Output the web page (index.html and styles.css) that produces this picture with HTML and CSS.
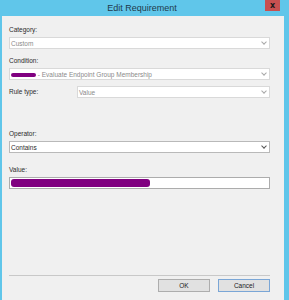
FILE: index.html
```html
<!DOCTYPE html>
<html lang="en">

<head>
    <meta charset="utf-8">
    <meta name="viewport" content="width=device-width, initial-scale=1.0">
    <title>Edit Requirement</title>

    <link rel="stylesheet" href="styles.css">
</head>

<body>
    <div class="window">
        <header class="titlebar">
            <h1>Edit Requirement</h1>
            <button class="close">x</button>
        </header>

        <main class="client">
            <div class="field">
                <label>Category:</label>
                <div class="select disabled">
                    <span>Custom</span>
                    <span class="arrow"></span>
                </div>
            </div>

            <div class="field condition">
                <label>Condition:</label>
                <div class="select disabled">
                    <span><span class="scribble small"></span> - Evaluate Endpoint Group Membership</span>
                    <span class="arrow"></span>
                </div>
            </div>

            <div class="field inline">
                <label>Rule type:</label>
                <div class="select disabled">
                    <span>Value</span>
                    <span class="arrow"></span>
                </div>
            </div>

            <div class="field operator">
                <label>Operator:</label>
                <div class="select">
                    <span>Contains</span>
                    <span class="arrow"></span>
                </div>
            </div>

            <div class="field value">
                <label>Value:</label>
                <div class="input">
                    <span class="scribble big"></span>
                </div>
            </div>

            <footer class="buttons">
                <button class="btn">OK</button>
                <button class="btn focus">Cancel</button>
            </footer>
        </main>
    </div>
</body>

</html>
```

FILE: styles.css
```css
body {
    margin: 0;
    font-family: "Liberation Sans", Arial, sans-serif;
    font-size: 6.5px;
    color: #2b2b2b;
}

.window {
    width: 289px;
    height: 300px;
    background: #60c6ea;
    display: flex;
    flex-direction: column;
}

.titlebar {
    height: 16px;
    position: relative;
    display: flex;
    justify-content: center;
    align-items: center;
}

.titlebar h1 {
    margin: 0 5px 0 0;
    font-size: 9px;
    font-weight: normal;
    color: #1f3a4a;
}

.close {
    position: absolute;
    left: 265px;
    top: 0;
    width: 15px;
    height: 11px;
    padding: 0;
    border: none;
    background: #c75050;
    color: #1a1a1a;
    font-family: "DejaVu Sans", sans-serif;
    font-weight: bold;
    font-size: 8px;
    line-height: 10px;
}

.client {
    flex: 1;
    margin: 0 5px 0 2px;
    background: #f0f0f0;
    padding: 0 14px 0 7px;
    display: flex;
    flex-direction: column;
}

.field label {
    display: block;
    height: 8px;
    line-height: 8px;
}

.field {
    margin-top: 10px;
}

.select,
.input {
    height: 10px;
    margin-top: 3px;
    border: 1px solid #b9b9b9;
    background: #fff;
    display: flex;
    align-items: center;
    justify-content: space-between;
    padding: 0 3px 0 1px;
}

.select.disabled {
    border-color: #d9d9d9;
    color: #8a8a8a;
}

.arrow {
    width: 3px;
    height: 3px;
    border-right: 1px solid #555;
    border-bottom: 1px solid #555;
    transform: rotate(45deg);
    margin-top: -2px;
}

.disabled .arrow {
    border-color: #a8a8a8;
}

.condition {
    margin-top: 8px;
}

.inline {
    margin-top: 6px;
    display: flex;
    align-items: center;
}

.inline label {
    width: 68px;
}

.inline .select {
    flex: 1;
    margin-top: 0;
}

.operator {
    margin-top: 32px;
}

.value {
    margin-top: 13px;
}

.input {
    border-color: #acacac;
    padding: 0;
}

.scribble {
    display: inline-block;
    background: #800080;
    border-radius: 3px;
    vertical-align: middle;
}

.scribble.small {
    width: 25px;
    height: 4px;
    margin-left: 0;
}

.scribble.big {
    width: 139px;
    height: 8px;
    margin-left: 1px;
}

.buttons {
    margin-top: auto;
    margin-bottom: 8px;
    border-top: 1px solid #c8c8c8;
    padding-top: 3px;
    display: flex;
    justify-content: flex-end;
    gap: 8px;
}

.btn {
    width: 52px;
    height: 13px;
    padding: 0;
    font-family: "Liberation Sans", Arial, sans-serif;
    font-size: 6.5px;
    color: #222;
    background: #e1e1e1;
    border: 1px solid #adadad;
}

.btn.focus {
    border-color: #7aa6d6;
}
```
